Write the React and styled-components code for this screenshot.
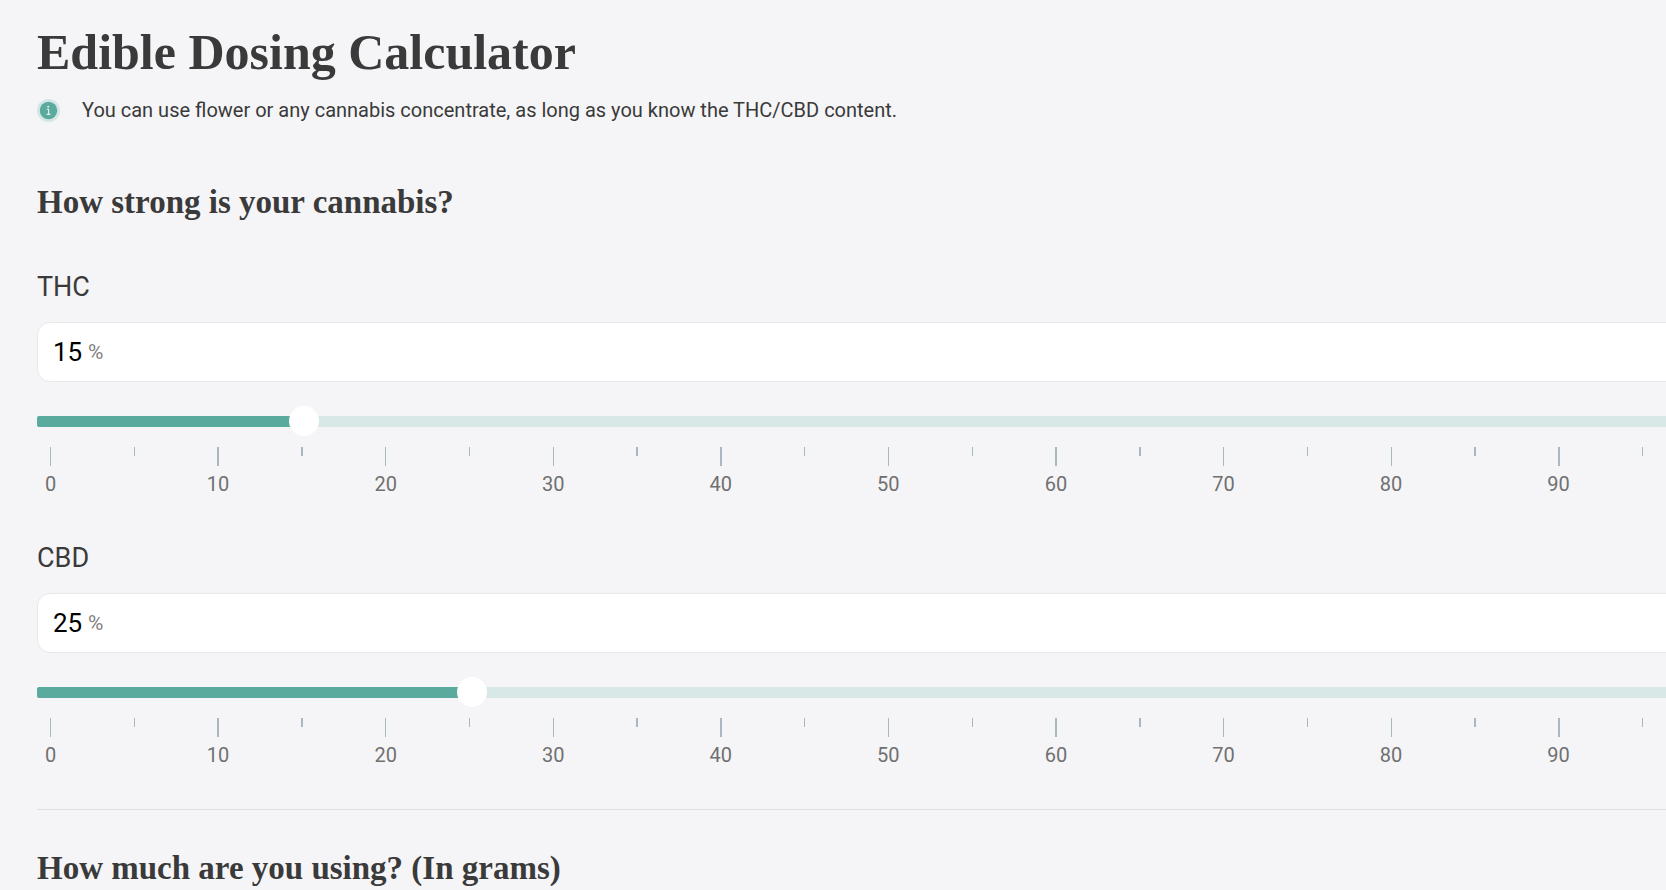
import React, { useState } from 'react'
import styled, { createGlobalStyle } from 'styled-components'

const GlobalStyle = createGlobalStyle`
  * {
    box-sizing: border-box;
  }

  body {
    margin: 0;
    background: #f5f5f7;
    color: #3a3a3a;
    font-family: Roboto, "Liberation Sans", sans-serif;
    overflow: hidden;
  }
`

// the calculator is a little wider than the window and runs off its right side
const Page = styled.main`
  width: calc(100% + 118px);
  padding: 22px 37px;
`

const Title = styled.h1`
  margin: 0;
  font-family: "Liberation Serif", serif;
  font-size: 50px;
  font-weight: 700;
  line-height: 60px;
`

const Hint = styled.p`
  display: flex;
  align-items: center;
  gap: 22px;
  margin: 14px 0 0;
  font-size: 20px;
  line-height: 28px;
`

const InfoIcon = styled.svg`
  width: 23px;
  height: 23px;
  flex: none;
`

const Section = styled.section`
  margin-top: ${props => props.$top}px;
`

const Heading = styled.h2`
  margin: 0;
  font-family: "Liberation Serif", serif;
  font-size: 33px;
  font-weight: 700;
  line-height: 40px;
`

const Field = styled.div`
  margin-top: 49px;
`

const Label = styled.label`
  display: block;
  font-size: 27px;
  line-height: 32px;
`

const InputBox = styled.div`
  display: flex;
  align-items: center;
  height: 60px;
  margin-top: 19px;
  padding: 0 15px;
  gap: 5px;
  background: #fff;
  border: 1px solid #e8e8ec;
  border-radius: 13px;
`

const NumberInput = styled.input`
  width: 30px;
  padding: 0;
  border: none;
  outline: none;
  background: none;
  color: #000;
  font-family: inherit;
  font-size: 26px;
`

const Unit = styled.span`
  color: #828282;
  font-size: 21px;
`

const Slider = styled.input`
  display: block;
  appearance: none;
  width: 100%;
  height: 30px;
  margin: 24px 0 0;
  background: none;
  cursor: pointer;

  &::-webkit-slider-runnable-track {
    height: 11px;
    border-radius: 2px;
    background: linear-gradient(
      to right,
      #5aab9d ${props => props.value}%,
      #d8e8e6 ${props => props.value}%
    );
  }

  &::-webkit-slider-thumb {
    appearance: none;
    width: 30px;
    height: 30px;
    margin-top: -10px;
    border: none;
    border-radius: 50%;
    background: #fff;
  }
`

const Scale = styled.div`
  display: flex;
  justify-content: space-between;
  height: 46px;
  margin-top: 11px;
  padding: 0 104px 0 13px;
`

const Tick = styled.div`
  display: flex;
  flex-direction: column;
  align-items: center;
  width: 1px;
  color: #707070;
  font-size: 20px;
  line-height: 24px;

  &::before {
    content: '';
    flex: none;
    width: ${props => props.$bold ? 2 : 1}px;
    height: ${props => props.$major ? 19 : 9}px;
    margin-bottom: 6px;
    background: #a9b8c0;
  }
`

const Divider = styled.hr`
  margin: 45px 0 0;
  border: none;
  border-top: 1px solid #dedfe1;
`

const ticks = Array.from({ length: 20 }, (_, i) => i * 5)
const boldTicks = [10, 15, 35, 40, 60, 65, 85, 90]

const PercentField = ({ name, initial }) => {
  const [value, setValue] = useState(initial)
  const id = name.toLowerCase()
  const handleChange = event => setValue(event.target.value)

  return (
    <Field>
      <Label htmlFor={id}>{name}</Label>
      <InputBox>
        <NumberInput
          id={id}
          type="text"
          inputMode="numeric"
          value={value}
          onChange={handleChange} />
        <Unit>%</Unit>
      </InputBox>
      <Slider
        type="range"
        min="0"
        max="100"
        aria-label={`${name} percent`}
        value={value}
        onChange={handleChange} />
      <Scale>
        {ticks.map(tick => (
          <Tick key={tick} $major={tick % 10 === 0} $bold={boldTicks.includes(tick)}>
            {tick % 10 === 0 && tick}
          </Tick>
        ))}
      </Scale>
    </Field>
  )
}

const App = () => (
  <>
    <GlobalStyle />
    <Page>
      <Title>Edible Dosing Calculator</Title>
      <Hint>
        <InfoIcon viewBox="0 0 23 23" aria-hidden="true">
          <circle cx="11.5" cy="11.5" r="11.5" fill="#d5e6e4" />
          <circle cx="11.5" cy="11.5" r="8.7" fill="#5aab9d" />
          <circle cx="11.2" cy="7.8" r="1" fill="#e4f2f0" />
          <path d="M9.8 10.3h1.8v5M9.6 15.4h3.8" fill="none" stroke="#e4f2f0" strokeWidth="1.1" />
        </InfoIcon>
        You can use flower or any cannabis concentrate, as long as you know the THC/CBD content.
      </Hint>

      <Section $top={58}>
        <Heading>How strong is your cannabis?</Heading>
        <PercentField name="THC" initial={15} />
        <PercentField name="CBD" initial={25} />
      </Section>

      <Divider />

      <Section $top={38}>
        <Heading>How much are you using? (In grams)</Heading>
      </Section>
    </Page>
  </>
)

export default App
